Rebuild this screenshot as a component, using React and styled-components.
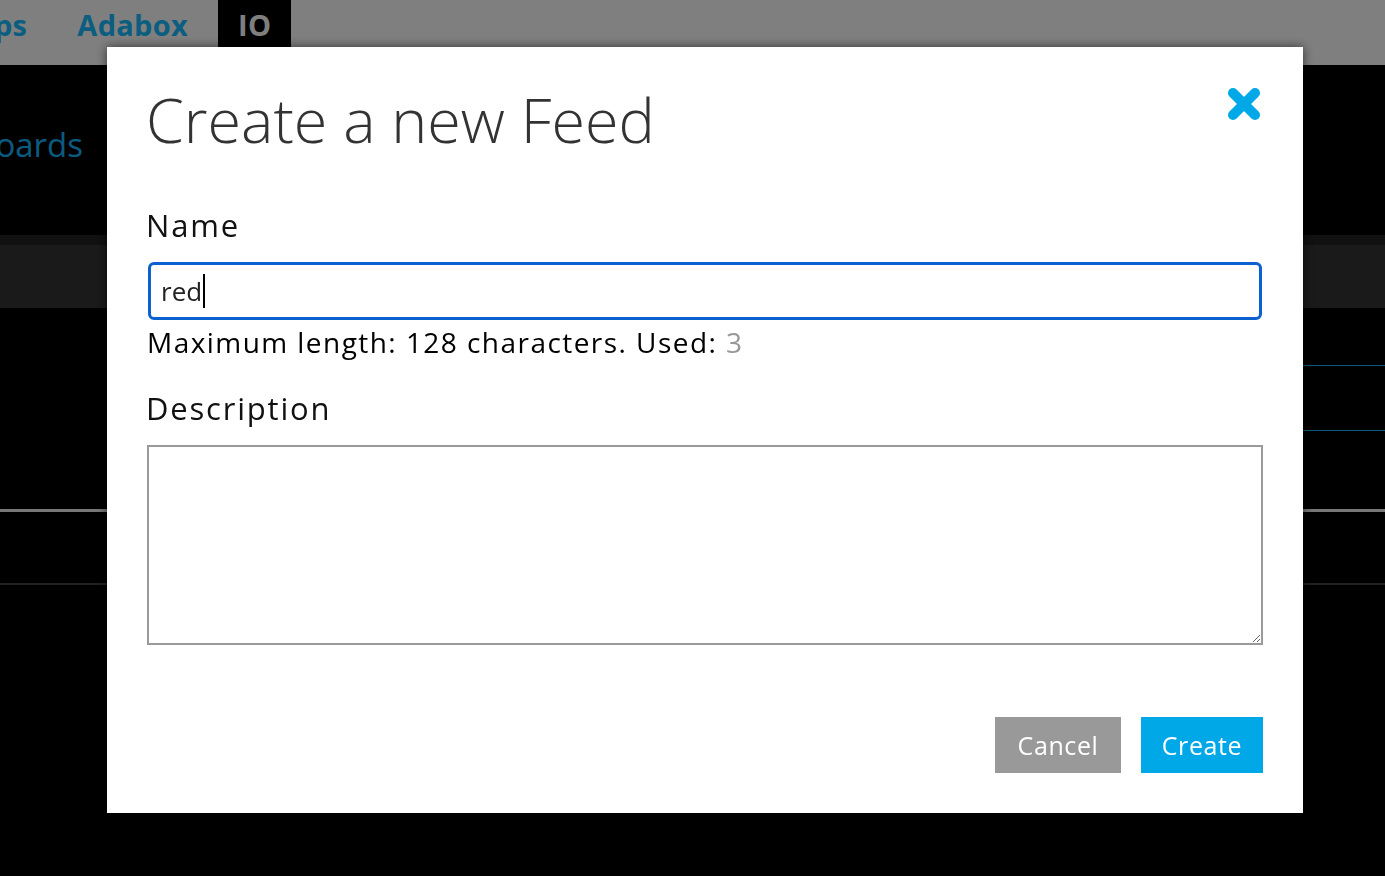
import React from 'react';
import styled, { createGlobalStyle } from 'styled-components';

const GlobalStyle = createGlobalStyle`
  html, body {
    margin: 0;
    padding: 0;
    background: #000;
    font-family: "Open Sans", Lato, "Liberation Sans", sans-serif;
    overflow: hidden;
  }
`;

const Page = styled.div`
  width: 100%;
  height: 876px;
  background: #000;
  overflow: hidden;
`;

const Header = styled.div`
  height: 65px;
  background: #fff;
  display: flex;
  align-items: flex-start;
`;

const Nav = styled.nav`
  display: flex;
  gap: 10px;
  margin-left: -65px;
`;

const NavItem = styled.a`
  display: flex;
  align-items: center;
  height: 48px;
  padding: 0 20px;
  font-size: 29px;
  font-weight: 700;
  letter-spacing: 0.3px;
  color: ${p => (p.active ? '#fff' : '#17bdfe')};
  background: ${p => (p.active ? '#000' : 'transparent')};
  text-decoration: none;
`;

const SubNav = styled.div`
  height: 170px;
  display: flex;
  align-items: center;
  padding-bottom: 12px;
  box-sizing: border-box;
  margin-left: -103px;
`;

const SubLink = styled.a`
  font-size: 33px;
  color: #17b6fe;
  text-decoration: none;
`;

const Band = styled.div`
  height: 73px;
  background: #343434;
  border-top: 10px solid #222;
  box-sizing: border-box;
`;

const Row = styled.div`
  height: ${p => p.h}px;
  box-sizing: border-box;
  margin-left: ${p => p.indent || 0}px;
  border-bottom: ${p => p.line};
`;

const Overlay = styled.div`
  position: fixed;
  inset: 0;
  background: rgba(0, 0, 0, 0.5);
  padding: 47px 0 0 107px;
  box-sizing: border-box;
`;

const Modal = styled.div`
  width: 1196px;
  background: #fff;
  box-sizing: border-box;
  padding: 42px 40px 40px 41px;
  box-shadow: 0 0 10px rgba(0, 0, 0, 0.6);
  display: flex;
  flex-direction: column;
`;

const ModalHeader = styled.div`
  display: flex;
  justify-content: space-between;
  align-items: flex-start;
`;

const Title = styled.h2`
  margin: 0 0 0 -2px;
  font-size: 61px;
  line-height: 1;
  font-weight: 300;
  color: #333;
`;

const CloseButton = styled.button`
  border: 0;
  background: none;
  padding: 0;
  margin-top: -2px;
  margin-right: 2px;
  width: 34px;
  height: 34px;
  cursor: pointer;
`;

const Label = styled.label`
  display: block;
  font-size: 31px;
  line-height: 1;
  letter-spacing: 1.8px;
  color: #111;
  margin-top: ${p => p.top}px;
  margin-left: -2px;
`;

const NameField = styled.div`
  margin-top: 21px;
  margin-right: 1px;
  height: 58px;
  box-sizing: border-box;
  border: 3px solid #0b61cf;
  border-radius: 6px;
  display: flex;
  align-items: center;
  padding-left: 10px;
  font-size: 26px;
  color: #222;
`;

const Caret = styled.span`
  display: inline-block;
  width: 2px;
  height: 34px;
  background: #000;
  margin-left: 1px;
`;

const Hint = styled.div`
  margin-top: 8px;
  margin-left: -1px;
  font-size: 28px;
  line-height: 1;
  letter-spacing: 1.45px;
  color: #000;
`;

const Used = styled.span`
  color: #999;
`;

const TextArea = styled.textarea`
  display: block;
  margin-top: 21px;
  height: 200px;
  width: calc(100% + 1px);
  margin-left: -1px;
  box-sizing: border-box;
  border: 2px solid #9a9a9a;
  border-radius: 0;
  resize: both;
  font-family: inherit;
  font-size: 26px;
  outline: none;
`;

const Actions = styled.div`
  margin-top: 72px;
  display: flex;
  justify-content: flex-end;
  gap: 20px;
`;

const Button = styled.button`
  height: 56px;
  width: ${p => p.w}px;
  border: 0;
  border-radius: 0;
  font-family: inherit;
  font-size: 25px;
  letter-spacing: 0.6px;
  color: #fff;
  background: ${p => (p.primary ? '#00a8e7' : '#999')};
  cursor: pointer;
`;

function CloseIcon() {
  return (
    <svg width="34" height="34" viewBox="0 0 34 34">
      <g stroke="#00a8e7" strokeWidth="10" strokeLinecap="round">
        <line x1="6" y1="6" x2="28" y2="28" />
        <line x1="28" y1="6" x2="6" y2="28" />
      </g>
    </svg>
  );
}

export default function App() {
  return (
    <>
      <GlobalStyle />
      <Page>
        <Header>
          <Nav>
            <NavItem>Apps</NavItem>
            <NavItem>Adabox</NavItem>
            <NavItem active>IO</NavItem>
          </Nav>
        </Header>
        <SubNav>
          <SubLink>Dashboards</SubLink>
        </SubNav>
        <Band />
        <Row h={58} indent={700} line="1px solid #17b6fe" />
        <Row h={65} indent={700} line="1px solid #17b6fe" />
        <Row h={81} line="3px solid #eee" />
        <Row h={73} line="2px solid #444" />
      </Page>
      <Overlay>
        <Modal>
          <ModalHeader>
            <Title>Create a new Feed</Title>
            <CloseButton aria-label="Close">
              <CloseIcon />
            </CloseButton>
          </ModalHeader>
          <Label top={60}>Name</Label>
          <NameField>
            red
            <Caret />
          </NameField>
          <Hint>
            Maximum length: 128 characters. Used: <Used>3</Used>
          </Hint>
          <Label top={37}>Description</Label>
          <TextArea />
          <Actions>
            <Button w={126}>Cancel</Button>
            <Button w={122} primary>
              Create
            </Button>
          </Actions>
        </Modal>
      </Overlay>
    </>
  );
}
